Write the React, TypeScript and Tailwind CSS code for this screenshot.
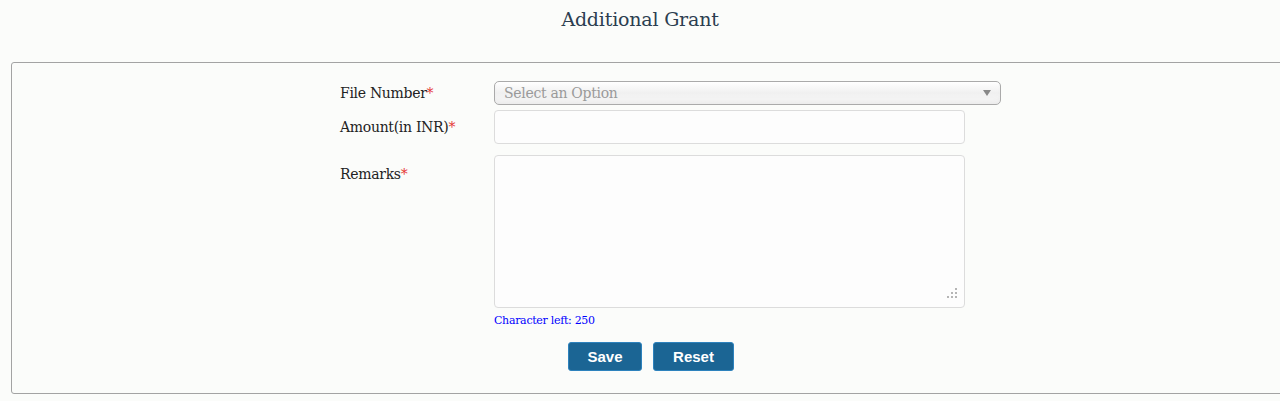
import React from "react";

export default function App() {
  const serif = { fontFamily: '"DejaVu Serif", "Liberation Serif", serif' };
  return (
    <div className="w-[1280px] h-[401px] bg-[#fbfcfa] overflow-hidden" style={serif}>
      <div className="h-[62px] pt-[5px] text-center text-[19px] text-[#2c3e50] tracking-[-0.2px]">
        Additional Grant
      </div>
      <div className="ml-[11px] w-[1300px] h-[332px] border border-[#a3a3a3] rounded-tl-[3px] rounded-bl-[3px] pt-[18px]">
        <div className="flex">
          <div className="w-[482px] shrink-0 flex flex-col text-[14px] text-[#222] pl-[328px]">
            <div className="h-[24px] flex items-center tracking-[-0.3px]">
              File Number<span className="text-[#e53935]">*</span>
            </div>
            <div className="h-[34px] mt-[5px] flex items-center tracking-[-0.3px]">
              Amount(in INR)<span className="text-[#e53935]">*</span>
            </div>
            <div className="mt-[12px] pt-[8px] tracking-[-0.3px]">
              Remarks<span className="text-[#e53935]">*</span>
            </div>
          </div>
          <div className="flex flex-col">
            <div className="w-[507px] h-[24px] rounded-[5px] border border-[#aaa] bg-gradient-to-b from-white via-[#f0f0f0] to-[#fafafa] shadow-[inset_0_-6px_6px_-4px_#e6e6e6] flex items-center justify-between pl-[9px] pr-[9px]">
              <span className="text-[14px] text-[#9a9a9a] tracking-[-0.3px]">Select an Option</span>
              <svg width="8" height="6" viewBox="0 0 8 6"><path d="M0 0 L8 0 L4 6 Z" fill="#888" /></svg>
            </div>
            <div className="w-[471px] h-[34px] mt-[5px] rounded-[4px] border border-[#dcdcdc] bg-[#fdfdfd]" />
            <div className="relative w-[471px] h-[153px] mt-[11px] rounded-[4px] border border-[#dcdcdc] bg-[#fdfdfd]">
              <svg className="absolute right-[6px] bottom-[8px]" width="11" height="11" viewBox="0 0 11 11">
                <rect x="8" y="0" width="2" height="2" fill="#b5b5b5" />
                <rect x="4" y="4" width="2" height="2" fill="#b5b5b5" />
                <rect x="8" y="4" width="2" height="2" fill="#b5b5b5" />
                <rect x="0" y="8" width="2" height="2" fill="#b5b5b5" />
                <rect x="4" y="8" width="2" height="2" fill="#b5b5b5" />
                <rect x="8" y="8" width="2" height="2" fill="#b5b5b5" />
              </svg>
            </div>
            <div className="mt-[5px] text-[11px] text-[#0000ff] tracking-[-0.3px]">Character left: 250</div>
          </div>
        </div>
        <div className="flex gap-[11px] pl-[556px] mt-[12px]" style={{ fontFamily: '"Liberation Sans", Arial, sans-serif' }}>
          <button className="w-[74px] h-[29px] pt-[2px] rounded-[3px] bg-[#1b6594] border border-[#2d82bd] text-white font-bold text-[15px]">Save</button>
          <button className="w-[81px] h-[29px] pt-[2px] rounded-[3px] bg-[#1b6594] border border-[#2d82bd] text-white font-bold text-[15px]">Reset</button>
        </div>
      </div>
    </div>
  );
}
